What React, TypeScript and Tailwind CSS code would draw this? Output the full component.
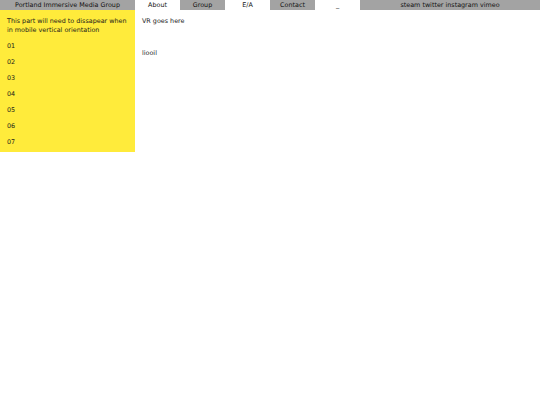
import React from 'react';

const navItems = [
    { label: 'Portland Immersive Media Group', span: 'col-span-3', gray: true },
    { label: 'About', span: 'col-span-1', gray: false },
    { label: 'Group', span: 'col-span-1', gray: true },
    { label: 'E/A', span: 'col-span-1', gray: false },
    { label: 'Contact', span: 'col-span-1', gray: true },
    { label: '_', span: 'col-span-1', gray: false },
    { label: 'steam twitter instagram vimeo', span: 'col-span-4', gray: true },
];

const items = ['01', '02', '03', '04', '05', '06', '07'];

export default function App() {
    return (
        <div className="w-[540px] h-[405px] bg-white text-black text-[6.4px] leading-[9px]" style={{ fontFamily: '"DejaVu Sans", Verdana, sans-serif' }}>
            <nav className="grid grid-cols-12 h-[10px]">
                {navItems.map(item => (
                    <div
                        key={item.label}
                        className={`${item.span} ${item.gray ? 'bg-[#a3a3a3]' : 'bg-white'} h-[10px] leading-[10px] text-center text-[#111]`}
                    >
                        {item.label}
                    </div>
                ))}
            </nav>
            <div className="grid grid-cols-12 items-start">
                {/* side panel */}
                <aside className="col-span-3 bg-[#ffeb3b] pl-[7px] pr-[3px] pt-[7px] pb-[5px] text-[#1a1a1a]">
                    <p>This part will need to dissapear when in mobile vertical orientation</p>
                    <ul className="mt-[7px] flex flex-col gap-[7px]">
                        {items.map(i => (
                            <li key={i}>{i}</li>
                        ))}
                    </ul>
                </aside>
                <main className="col-span-9 px-[7px] pt-[7px] text-[#1a1a1a]">
                    <p>VR goes here</p>
                    <p className="mt-[23px]">lioоil</p>
                </main>
            </div>
        </div>
    );
}
